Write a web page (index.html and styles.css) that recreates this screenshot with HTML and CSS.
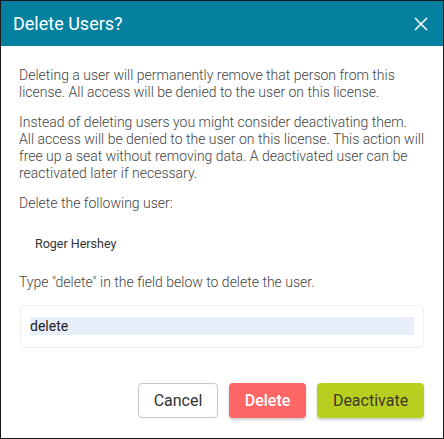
FILE: index.html
```html
<!DOCTYPE html>
<html>
<head>
    <title>Delete Users?</title>
    <meta charset="UTF-8">
    <link rel="stylesheet" href="styles.css">
</head>
<body>
    <div class="dialog">
        <div class="dialog-header">
            <h2>Delete Users?</h2>
            <button class="close-btn" aria-label="Close">
                <svg width="14" height="14" viewBox="0 0 14 14">
                    <path d="M1 1 L13 13 M13 1 L1 13" stroke="#fff" stroke-width="1.6" fill="none"/>
                </svg>
            </button>
        </div>

        <div class="dialog-body">
            <p>Deleting a user will permanently remove that person from this license. All access will be denied to the user on this license.</p>
            <p>Instead of deleting users you might consider deactivating them. All access will be denied to the user on this license. This action will free up a seat without removing data. A deactivated user can be reactivated later if necessary.</p>
            <p>Delete the following user:</p>
            <div class="user-name">Roger Hershey</div>
            <p class="type-hint">Type "delete" in the field below to delete the user.</p>
            <div class="confirm-box">
                <input class="confirm-input" type="text" value="delete">
            </div>
        </div>

        <div class="dialog-footer">
            <button class="btn btn-cancel">Cancel</button>
            <button class="btn btn-delete">Delete</button>
            <button class="btn btn-deactivate">Deactivate</button>
        </div>
    </div>
</body>
</html>
```

FILE: styles.css
```css
body {
    margin: 0;
    font-family: Roboto, 'Liberation Sans', sans-serif;
    background: #fff;
}
.dialog {
    width: 444px;
    height: 439px;
    box-sizing: border-box;
    border: 1px solid #1a1a1a;
    display: flex;
    flex-direction: column;
    background: #fff;
}
.dialog-header {
    height: 45px;
    background-color: #05819f;
    display: flex;
    align-items: center;
    justify-content: space-between;
    padding: 0 14px 0 12px;
    flex-shrink: 0;
}
.dialog-header h2 {
    margin: 0;
    font-size: 18px;
    font-weight: 400;
    color: #fff;
}
.close-btn {
    border: none;
    background: none;
    padding: 0;
    width: 16px;
    height: 16px;
    display: flex;
    align-items: center;
    justify-content: center;
    cursor: pointer;
}
.dialog-body {
    padding: 21px 18px 0 18px;
    flex: 1;
}
.dialog-body p {
    margin: 0 0 13px;
    font-size: 14px;
    line-height: 17px;
    font-weight: 300;
    color: #444;
}
.user-name {
    font-size: 12.5px;
    line-height: 15px;
    color: #333;
    padding: 11px 0 23px 16px;
}
.dialog-body .type-hint {
    margin-bottom: 14px;
}
.confirm-box {
    margin: 0 1px;
    border: 1px solid #f0f0f0;
    border-radius: 4px;
    padding: 11px 9px 12px 9px;
}
.confirm-input {
    display: block;
    width: 100%;
    box-sizing: border-box;
    height: 18px;
    border: none;
    outline: none;
    padding: 0;
    background: #e8eefa;
    font-family: Roboto, 'Liberation Sans', sans-serif;
    font-size: 14px;
    color: #222;
}
.dialog-footer {
    display: flex;
    justify-content: flex-end;
    gap: 11px;
    padding: 0 19px 20px;
}
.btn {
    height: 35px;
    border-radius: 4px;
    font-family: Roboto, 'Liberation Sans', sans-serif;
    font-size: 16px;
    padding: 0 12px;
    cursor: pointer;
}
.btn-cancel {
    background: #fff;
    border: 1px solid #c8c8c8;
    color: #333;
    width: 80px;
}
.btn-delete {
    background: #ff6666;
    border: none;
    color: #fff;
    font-weight: 500;
    width: 77px;
    box-shadow: 0 2px 3px rgba(0, 0, 0, 0.2);
}
.btn-deactivate {
    background: #b8cf1f;
    border: none;
    color: #3a3a2a;
    width: 107px;
    box-shadow: 0 2px 3px rgba(0, 0, 0, 0.2);
}
```
